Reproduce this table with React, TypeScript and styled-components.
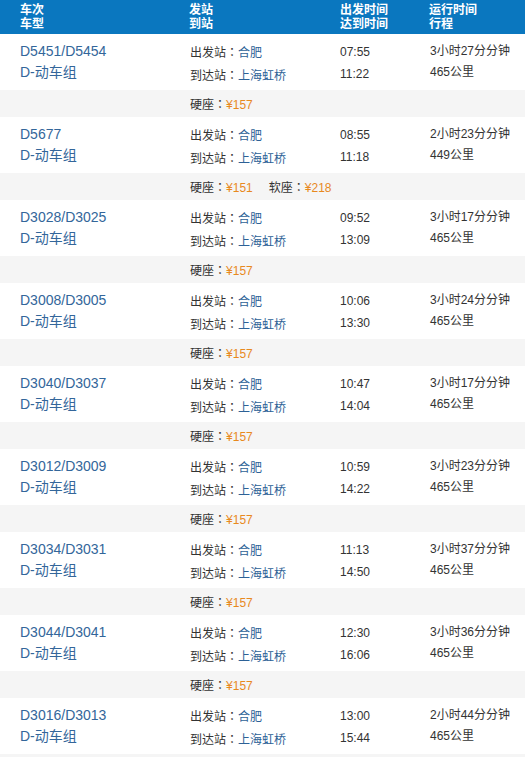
import React from "react";
import styled, { createGlobalStyle } from "styled-components";

const Global = createGlobalStyle`
  html, body { margin: 0; padding: 0; background: #fff; }
  body { font-family: "Liberation Sans", Arial, "Noto Sans CJK SC", sans-serif; }
`;

const Table = styled.div`
  width: 525px;
  display: flex;
  flex-direction: column;
`;

const cols = "189px 151px 89px 1fr";

const Header = styled.div`
  display: grid;
  grid-template-columns: ${cols};
  height: 34px;
  background: #0a77bf;
  color: #fff;
  font-size: 12px;
  font-weight: bold;
  line-height: 14px;
  box-sizing: border-box;
  padding-top: 3px;
`;

const HeadCell = styled.div<{ $pad?: number }>`
  padding-left: ${(p) => p.$pad ?? 0}px;
  display: flex;
  flex-direction: column;
`;

const MainRow = styled.div`
  display: grid;
  grid-template-columns: ${cols};
  height: 56px;
  box-sizing: border-box;
  padding-top: 7px;
  line-height: 21px;
  color: #333;
  background: #fff;
`;

const Cell = styled.div<{ $pad?: number; $size?: number }>`
  padding-left: ${(p) => p.$pad ?? 0}px;
  font-size: ${(p) => p.$size ?? 12}px;
  display: flex;
  flex-direction: column;
  white-space: nowrap;
`;

const TimeLine = styled.span`
  padding-top: 1px;
`;

const TrainNo = styled.span`
  color: #33669a;
`;

const Station = styled.span`
  color: #2d6196;
`;

const Colon = styled.span`
  font-family: "Noto Sans CJK TC", sans-serif;
`;

const PriceRow = styled.div`
  height: 27px;
  background: #f5f5f5;
  display: flex;
  align-items: center;
  padding-left: 190px;
  font-size: 12px;
  color: #333;
  gap: 16px;
`;

const Price = styled.span`
  color: #e8891e;
`;

type Train = {
  no: string;
  dep: string;
  arr: string;
  dur: string;
  dist: string;
  prices: [string, string][];
};

const trains: Train[] = [
  { no: "D5451/D5454", dep: "07:55", arr: "11:22", dur: "3小时27分分钟", dist: "465公里", prices: [["硬座", "157"]] },
  { no: "D5677", dep: "08:55", arr: "11:18", dur: "2小时23分分钟", dist: "449公里", prices: [["硬座", "151"], ["软座", "218"]] },
  { no: "D3028/D3025", dep: "09:52", arr: "13:09", dur: "3小时17分分钟", dist: "465公里", prices: [["硬座", "157"]] },
  { no: "D3008/D3005", dep: "10:06", arr: "13:30", dur: "3小时24分分钟", dist: "465公里", prices: [["硬座", "157"]] },
  { no: "D3040/D3037", dep: "10:47", arr: "14:04", dur: "3小时17分分钟", dist: "465公里", prices: [["硬座", "157"]] },
  { no: "D3012/D3009", dep: "10:59", arr: "14:22", dur: "3小时23分分钟", dist: "465公里", prices: [["硬座", "157"]] },
  { no: "D3034/D3031", dep: "11:13", arr: "14:50", dur: "3小时37分分钟", dist: "465公里", prices: [["硬座", "157"]] },
  { no: "D3044/D3041", dep: "12:30", arr: "16:06", dur: "3小时36分分钟", dist: "465公里", prices: [["硬座", "157"]] },
  { no: "D3016/D3013", dep: "13:00", arr: "15:44", dur: "2小时44分分钟", dist: "465公里", prices: [["硬座", "157"]] },
];

export default function App() {
  return (
    <>
      <Global />
      <Table>
        <Header>
          <HeadCell $pad={20}>
            <span>车次</span>
            <span>车型</span>
          </HeadCell>
          <HeadCell>
            <span>发站</span>
            <span>到站</span>
          </HeadCell>
          <HeadCell>
            <span>出发时间</span>
            <span>达到时间</span>
          </HeadCell>
          <HeadCell>
            <span>运行时间</span>
            <span>行程</span>
          </HeadCell>
        </Header>
        {trains.map((t) => (
          <React.Fragment key={t.no}>
            <MainRow>
              <Cell $pad={20} $size={14}>
                <TrainNo>{t.no}</TrainNo>
                <TrainNo>D-动车组</TrainNo>
              </Cell>
              <Cell $pad={1}>
                <span>
                  出发站<Colon>：</Colon>
                  <Station>合肥</Station>
                </span>
                <span>
                  到达站<Colon>：</Colon>
                  <Station>上海虹桥</Station>
                </span>
              </Cell>
              <Cell>
                <TimeLine>{t.dep}</TimeLine>
                <TimeLine>{t.arr}</TimeLine>
              </Cell>
              <Cell $pad={1}>
                <span>{t.dur}</span>
                <span>{t.dist}</span>
              </Cell>
            </MainRow>
            <PriceRow>
              {t.prices.map(([k, v]) => (
                <span key={k}>
                  {k}
                  <Colon>：</Colon>
                  <Price>¥{v}</Price>
                </span>
              ))}
            </PriceRow>
          </React.Fragment>
        ))}
      </Table>
    </>
  );
}
